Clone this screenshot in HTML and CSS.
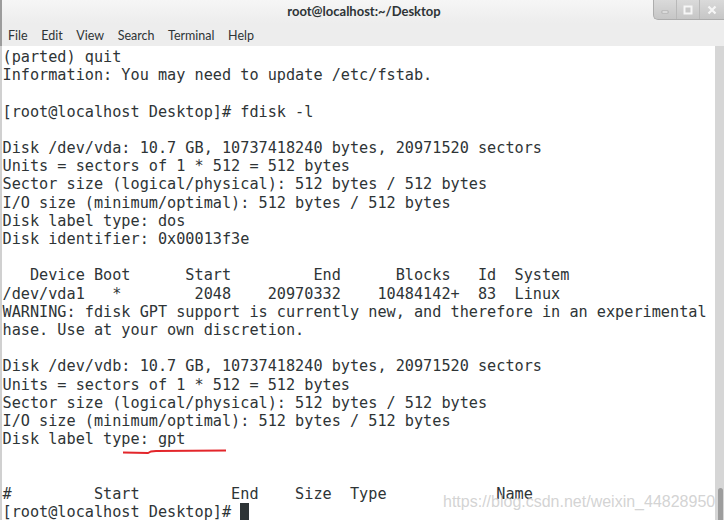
FILE: index.html
```html
<!DOCTYPE html>
<html lang="en">

<head>
    <meta charset="UTF-8">
    <title>root@localhost:~/Desktop</title>
    <link rel="stylesheet" href="styles.css">
</head>

<body>
    <div class="window">
        <header class="titlebar">
            <div></div>
            <div class="title">root@localhost:~/Desktop</div>
            <div class="controls">
                <span class="ctl">
                    <svg width="10" height="10" viewBox="0 0 10 10"><rect x="2" y="6" width="6" height="2" fill="#f6f6f6" stroke="#9a9a9a" stroke-width="0.6"/></svg>
                </span>
                <span class="ctl">
                    <svg width="10" height="10" viewBox="0 0 10 10"><rect x="1.5" y="1.5" width="7" height="7" fill="#c9c9c9" stroke="#f6f6f6" stroke-width="2"/></svg>
                </span>
                <span class="ctl last">
                    <svg width="10" height="10" viewBox="0 0 10 10"><path d="M1.5 1.5 L8.5 8.5 M8.5 1.5 L1.5 8.5" stroke="#f6f6f6" stroke-width="2.2"/></svg>
                </span>
            </div>
        </header>
        <nav class="menubar">
            <span>File</span>
            <span>Edit</span>
            <span>View</span>
            <span>Search</span>
            <span>Terminal</span>
            <span>Help</span>
        </nav>
        <main class="terminal">
<pre class="screen">(parted) quit
Information: You may need to update /etc/fstab.

[root@localhost Desktop]# fdisk -l

Disk /dev/vda: 10.7 GB, 10737418240 bytes, 20971520 sectors
Units = sectors of 1 * 512 = 512 bytes
Sector size (logical/physical): 512 bytes / 512 bytes
I/O size (minimum/optimal): 512 bytes / 512 bytes
Disk label type: dos
Disk identifier: 0x00013f3e

   Device Boot      Start         End      Blocks   Id  System
/dev/vda1   *        2048    20970332    10484142+  83  Linux
WARNING: fdisk GPT support is currently new, and therefore in an experimental
hase. Use at your own discretion.

Disk /dev/vdb: 10.7 GB, 10737418240 bytes, 20971520 sectors
Units = sectors of 1 * 512 = 512 bytes
Sector size (logical/physical): 512 bytes / 512 bytes
I/O size (minimum/optimal): 512 bytes / 512 bytes
Disk label type: gpt


#         Start          End    Size  Type            Name
[root@localhost Desktop]# <span class="cursor"> </span></pre>
            <div class="scrollbar">
                <div class="thumb"></div>
            </div>
            <!-- red pen mark under "gpt" -->
            <svg class="mark" width="715" height="474">
                <polyline points="123,406.5 148,407 151,405.5 156,405 226,404.5" fill="none" stroke="#e3262b" stroke-width="1.8"/>
            </svg>
            <div class="watermark">https://blog.csdn.net/weixin_44828950</div>
        </main>
    </div>
</body>

</html>
```

FILE: styles.css
```css
* {
    margin: 0;
    padding: 0;
    box-sizing: border-box;
}

body {
    background-color: #ffffff;
}

.window {
    width: 724px;
    height: 520px;
    overflow: hidden;
    display: flex;
    flex-direction: column;
}

.titlebar {
    height: 23px;
    display: grid;
    grid-template-columns: 1fr auto 1fr;
    align-items: start;
    background: linear-gradient(#f6f6f6, #ededed);
    border-left: 2px solid #9c9c9c;
}

.title {
    font-family: Lato, "DejaVu Sans", sans-serif;
    font-weight: bold;
    font-size: 13px;
    line-height: 22px;
    color: #2e3436;
    padding-left: 2px;
}

.controls {
    justify-self: end;
    display: flex;
    height: 20px;
    background: linear-gradient(#dadada, #c6c6c6);
    border-left: 1px solid #adadad;
    border-bottom: 1px solid #adadad;
    border-bottom-left-radius: 5px;
}

.ctl {
    width: 23px;
    display: flex;
    align-items: center;
    justify-content: center;
    border-right: 1px solid #b9b9b9;
}

.ctl.last {
    width: 24px;
    border-right: none;
}

.menubar {
    height: 23px;
    display: flex;
    gap: 13.6px;
    align-items: center;
    padding: 2px 0 0 6px;
    background-color: #ededed;
    border-left: 2px solid #9c9c9c;
    font-family: Lato, "DejaVu Sans", sans-serif;
    font-size: 12.5px;
    color: #2e3436;
}

.terminal {
    position: relative;
    flex: 1;
    display: flex;
    background-color: #ffffff;
    border-left: 2px solid #d0d0d0;
    overflow: hidden;
}

.screen {
    flex: 1;
    padding: 2px 0 0 0.5px;
    font-family: "DejaVu Sans Mono", monospace;
    font-size: 15.2px;
    line-height: 18.2px;
    color: #2e3436;
    overflow: hidden;
}

.cursor {
    background-color: #2e3436;
}

.scrollbar {
    width: 9px;
    display: flex;
    flex-direction: column;
    justify-content: flex-end;
    align-items: center;
    background-color: #d6d6d6;
}

.thumb {
    width: 5px;
    height: 32px;
    margin-left: 1px;
    border-radius: 3px 3px 0 0;
    background-color: #9d9d9d;
}

.mark {
    position: absolute;
    left: -2px;
    top: 0;
}

.watermark {
    position: absolute;
    left: 441px;
    top: 448px;
    font-family: "Liberation Sans", Arial, sans-serif;
    font-size: 16px;
    line-height: 16px;
    color: rgba(200, 200, 200, 0.8);
    white-space: nowrap;
}
```
